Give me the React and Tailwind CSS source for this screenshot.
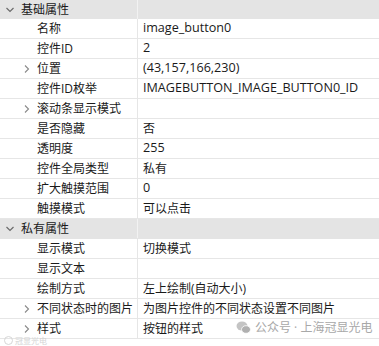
import React from 'react';

const groups = [
  {
    title: '基础属性',
    rows: [
      { label: '名称', value: 'image_button0' },
      { label: '控件ID', value: '2' },
      { label: '位置', value: '(43,157,166,230)', expand: true },
      { label: '控件ID枚举', value: 'IMAGEBUTTON_IMAGE_BUTTON0_ID' },
      { label: '滚动条显示模式', value: '', expand: true },
      { label: '是否隐藏', value: '否' },
      { label: '透明度', value: '255' },
      { label: '控件全局类型', value: '私有' },
      { label: '扩大触摸范围', value: '0' },
      { label: '触摸模式', value: '可以点击' },
    ],
  },
  {
    title: '私有属性',
    rows: [
      { label: '显示模式', value: '切换模式' },
      { label: '显示文本', value: '' },
      { label: '绘制方式', value: '左上绘制(自动大小)' },
      { label: '不同状态时的图片', value: '为图片控件的不同状态设置不同图片', expand: true },
      { label: '样式', value: '按钮的样式', expand: true },
    ],
  },
];

const ChevronDown = () => (
  <svg width="10" height="8" viewBox="0 0 10 8" className="shrink-0">
    <path d="M1.5 2 L5 5.5 L8.5 2" fill="none" stroke="#6b6b6b" strokeWidth="1.2" />
  </svg>
);

const ChevronRight = () => (
  <svg width="8" height="10" viewBox="0 0 8 10" className="shrink-0">
    <path d="M2 1.5 L5.5 5 L2 8.5" fill="none" stroke="#8a8a8a" strokeWidth="1.1" />
  </svg>
);

const GroupHeader = ({ title, first }) => (
  <div className={`flex bg-[#e4e4e4] ${first ? 'h-[19px]' : 'h-[20px] border-b border-[#e4e4e4]'}`}>
    <div className="w-[137px] flex items-center pl-[5px] gap-[6px]">
      <ChevronDown />
      <span>{title}</span>
    </div>
    <div className="w-px bg-[#f2f2f2]" />
    <div className="flex-1" />
  </div>
);

const isLatin = (s) => /^[\x20-\x7e]+$/.test(s);

const PropRow = ({ label, value, expand }) => (
  <div className="flex h-[20px] border-b border-[#e6e6e6]">
    <div className="w-[137px] flex items-center">
      <div className="w-[37px] flex justify-end pr-[6px]">{expand && <ChevronRight />}</div>
      <span className="whitespace-nowrap">{label}</span>
    </div>
    <div className="w-px bg-[#e6e6e6]" />
    <div className={`flex-1 flex items-center pl-[5px] whitespace-nowrap ${isLatin(value) ? 'text-[12.6px]' : ''}`}>
      {value}
    </div>
  </div>
);

export default function App() {
  return (
    <div
      className="relative w-[379px] h-[346px] overflow-hidden bg-white text-[12px] leading-none text-[#1a1a1a]"
      style={{ fontFamily: '"Open Sans", "Noto Sans CJK SC", sans-serif' }}
    >
      {groups.map((g, gi) => (
        <div key={g.title}>
          <GroupHeader title={g.title} first={gi === 0} />
          {g.rows.map((r) => (
            <PropRow key={r.label} {...r} />
          ))}
        </div>
      ))}

      {/* watermarks */}
      <div className="absolute left-[236px] top-[321px] flex items-center gap-[4px] whitespace-nowrap text-[#a8a8a8] text-[12px]">
        <svg width="15" height="13" viewBox="0 0 15 13">
          <ellipse cx="6" cy="5" rx="5.5" ry="4.5" fill="#c4c4c4" />
          <ellipse cx="10" cy="8.5" rx="4.5" ry="3.8" fill="#b0b0b0" stroke="#fff" strokeWidth="0.8" />
        </svg>
        <span>公众号 · 上海冠显光电</span>
      </div>
      <div className="absolute left-[4px] top-[336px] flex items-center gap-[2px] whitespace-nowrap text-[#d4d4d4] text-[8px]">
        <span className="border border-[#d6d6d6] rounded-full w-[9px] h-[9px]" />
        <span>冠显光电</span>
      </div>
    </div>
  );
}
